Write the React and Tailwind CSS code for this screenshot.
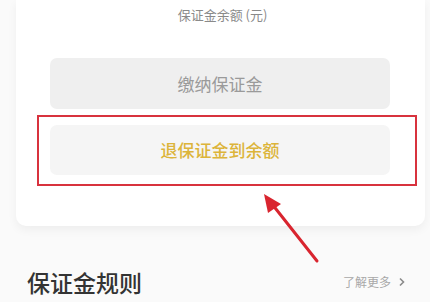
export default function App() {
  const font = { fontFamily: '"Noto Sans CJK SC", "Noto Sans", sans-serif' };
  return (
    <div className="w-[430px] h-[302px] bg-[#fafafa] overflow-hidden relative" style={font}>
      <div className="ml-[16px] w-[409px] bg-white rounded-b-[10px] shadow-[0_4px_10px_rgba(0,0,0,0.05)] pt-[6px] pb-[51px] flex flex-col items-center">
        <div className="text-[13px] leading-[18px] text-[#8a8a8a] ml-[4px]">保证金余额 (元)</div>
        <div className="mt-[34px] w-[340px] ml-[-1px] h-[51px] rounded-[7px] bg-[#efefef] flex items-center justify-center text-[17px] text-[#9a9a9a]">
          缴纳保证金
        </div>
        <div className="relative mt-[16px] w-[340px] ml-[-1px] h-[50px] rounded-[7px] bg-[#f5f5f5] flex items-center justify-center text-[17px] font-medium text-[#dcb43a]">
          退保证金到余额
          <div className="absolute left-[-13px] right-[-27px] top-[-10px] bottom-[-11px] border-2 border-[#d8323e]"></div>
        </div>
      </div>
      <svg className="absolute left-0 top-0" width="430" height="302">
        <line x1="317" y1="261" x2="272" y2="204" stroke="#d9252f" strokeWidth="3" strokeLinecap="round" />
        <polygon points="264,194 281,204 268,213" fill="#d9252f" />
      </svg>
      <div className="mt-[41px] flex items-center justify-between pl-[27px] pr-[24px]">
        <div className="text-[23px] leading-[30px] font-medium text-[#333333]">保证金规则</div>
        <div className="text-[12px] text-[#a8a8a8] flex items-center gap-[7px]">
          了解更多
          <svg width="8" height="10" viewBox="0 0 8 10"><path d="M2 1.5 L5.5 5 L2 8.5" stroke="#8a8a8a" strokeWidth="1.6" fill="none" /></svg>
        </div>
      </div>
    </div>
  );
}
